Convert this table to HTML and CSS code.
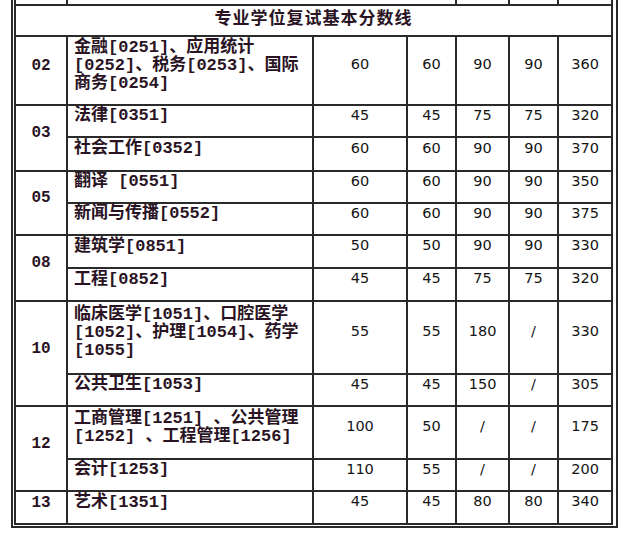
FILE: index.html
```html
<!DOCTYPE html>
<html lang="zh-CN">
<head>
<meta charset="utf-8">
<title>专业学位复试基本分数线</title>
<link rel="stylesheet" href="styles.css">
</head>
<body>
<div class="frame">
<table class="grid">
<colgroup>
<col class="c1"><col class="c2"><col class="c3"><col class="c4"><col class="c5"><col class="c6"><col class="c7">
</colgroup>
<tr class="cut"><td></td><td colspan="3"></td><td></td><td></td><td></td></tr>
<tr class="h31"><td colspan="7" class="title">专业学位复试基本分数线</td></tr>
<tr class="h69"><td class="code">02</td><td class="subj">金融[0251]、应用统计<br>[0252]、税务[0253]、国际<br>商务[0254]</td><td class="num">60</td><td class="num">60</td><td class="num">90</td><td class="num">90</td><td class="num">360</td></tr>
<tr class="h32"><td class="code" rowspan="2">03</td><td class="subj">法律[0351]</td><td class="num">45</td><td class="num">45</td><td class="num">75</td><td class="num">75</td><td class="num">320</td></tr>
<tr class="h34"><td class="subj">社会工作[0352]</td><td class="num">60</td><td class="num">60</td><td class="num">90</td><td class="num">90</td><td class="num">370</td></tr>
<tr class="h32"><td class="code" rowspan="2">05</td><td class="subj">翻译 [0551]</td><td class="num">60</td><td class="num">60</td><td class="num">90</td><td class="num">90</td><td class="num">350</td></tr>
<tr class="h32"><td class="subj">新闻与传播[0552]</td><td class="num">60</td><td class="num">60</td><td class="num">90</td><td class="num">90</td><td class="num">375</td></tr>
<tr class="h33"><td class="code" rowspan="2">08</td><td class="subj">建筑学[0851]</td><td class="num">50</td><td class="num">50</td><td class="num">90</td><td class="num">90</td><td class="num">330</td></tr>
<tr class="h33"><td class="subj">工程[0852]</td><td class="num">45</td><td class="num">45</td><td class="num">75</td><td class="num">75</td><td class="num">320</td></tr>
<tr class="h73"><td class="code" rowspan="2">10</td><td class="subj">临床医学[1051]、口腔医学<br>[1052]、护理[1054]、药学<br>[1055]</td><td class="num">55</td><td class="num">55</td><td class="num">180</td><td class="num">/</td><td class="num">330</td></tr>
<tr class="h32"><td class="subj">公共卫生[1053]</td><td class="num">45</td><td class="num">45</td><td class="num">150</td><td class="num">/</td><td class="num">305</td></tr>
<tr class="h53"><td class="code" rowspan="2">12</td><td class="subj">工商管理[1251] 、公共管理<br>[1252] 、工程管理[1256]</td><td class="num">100</td><td class="num">50</td><td class="num">/</td><td class="num">/</td><td class="num">175</td></tr>
<tr class="h32"><td class="subj">会计[1253]</td><td class="num">110</td><td class="num">55</td><td class="num">/</td><td class="num">/</td><td class="num">200</td></tr>
<tr class="h33"><td class="code">13</td><td class="subj">艺术[1351]</td><td class="num">45</td><td class="num">45</td><td class="num">80</td><td class="num">80</td><td class="num">340</td></tr>
</table>
</div>
</body>
</html>
```
FILE: styles.css
```css
html, body {
  margin: 0;
  padding: 0;
  background: #ffffff;
}

.frame {
  margin-left: 11px;
  width: 601px;
  padding: 0 1px 1px 1px;
  border-left: 2px solid #2a2a2a;
  border-right: 2px solid #2a2a2a;
  border-bottom: 2px solid #2a2a2a;
}

.grid {
  width: 599px;
  border-collapse: collapse;
  table-layout: fixed;
  border-top: none;
}

.c1 { width: 52px; }
.c2 { width: 246px; }
.c3 { width: 94px; }
.c4 { width: 49px; }
.c5 { width: 53px; }
.c6 { width: 49px; }
.c7 { width: 54px; }

.grid td {
  border: 2px solid #2a2a2a;
  padding: 0 0 10px 0;
  vertical-align: middle;
}

.cut { height: 4px; }
.cut td {
  border-top: none;
  padding: 0;
  font-size: 0;
  line-height: 0;
  height: 4px;
}

.h31 { height: 31px; }
.h32 { height: 32px; }
.h33 { height: 33px; }
.h34 { height: 34px; }
.h53 { height: 53px; }
.h69 { height: 69px; }
.h73 { height: 73px; }

.title {
  text-align: center;
  font-family: "Noto Sans CJK SC", sans-serif;
  font-weight: 700;
  font-size: 17px;
  letter-spacing: 1px;
  line-height: 20px;
  color: #2a1424;
  padding-bottom: 7px !important;
}

.code {
  text-align: center;
  font-family: "Liberation Mono", "Noto Sans CJK SC", monospace;
  font-weight: 700;
  font-size: 16px;
  line-height: 18px;
  color: #2a1424;
}

.subj {
  padding-left: 6px !important;
  font-family: "Liberation Mono", "Noto Sans CJK SC", monospace;
  font-weight: 700;
  font-size: 17px;
  line-height: 18px;
  color: #2a1424;
  white-space: nowrap;
}

.num {
  text-align: center;
  font-family: "DejaVu Sans", sans-serif;
  font-size: 14.5px;
  line-height: 16px;
  color: #151515;
  padding-bottom: 13px !important;
}
```
